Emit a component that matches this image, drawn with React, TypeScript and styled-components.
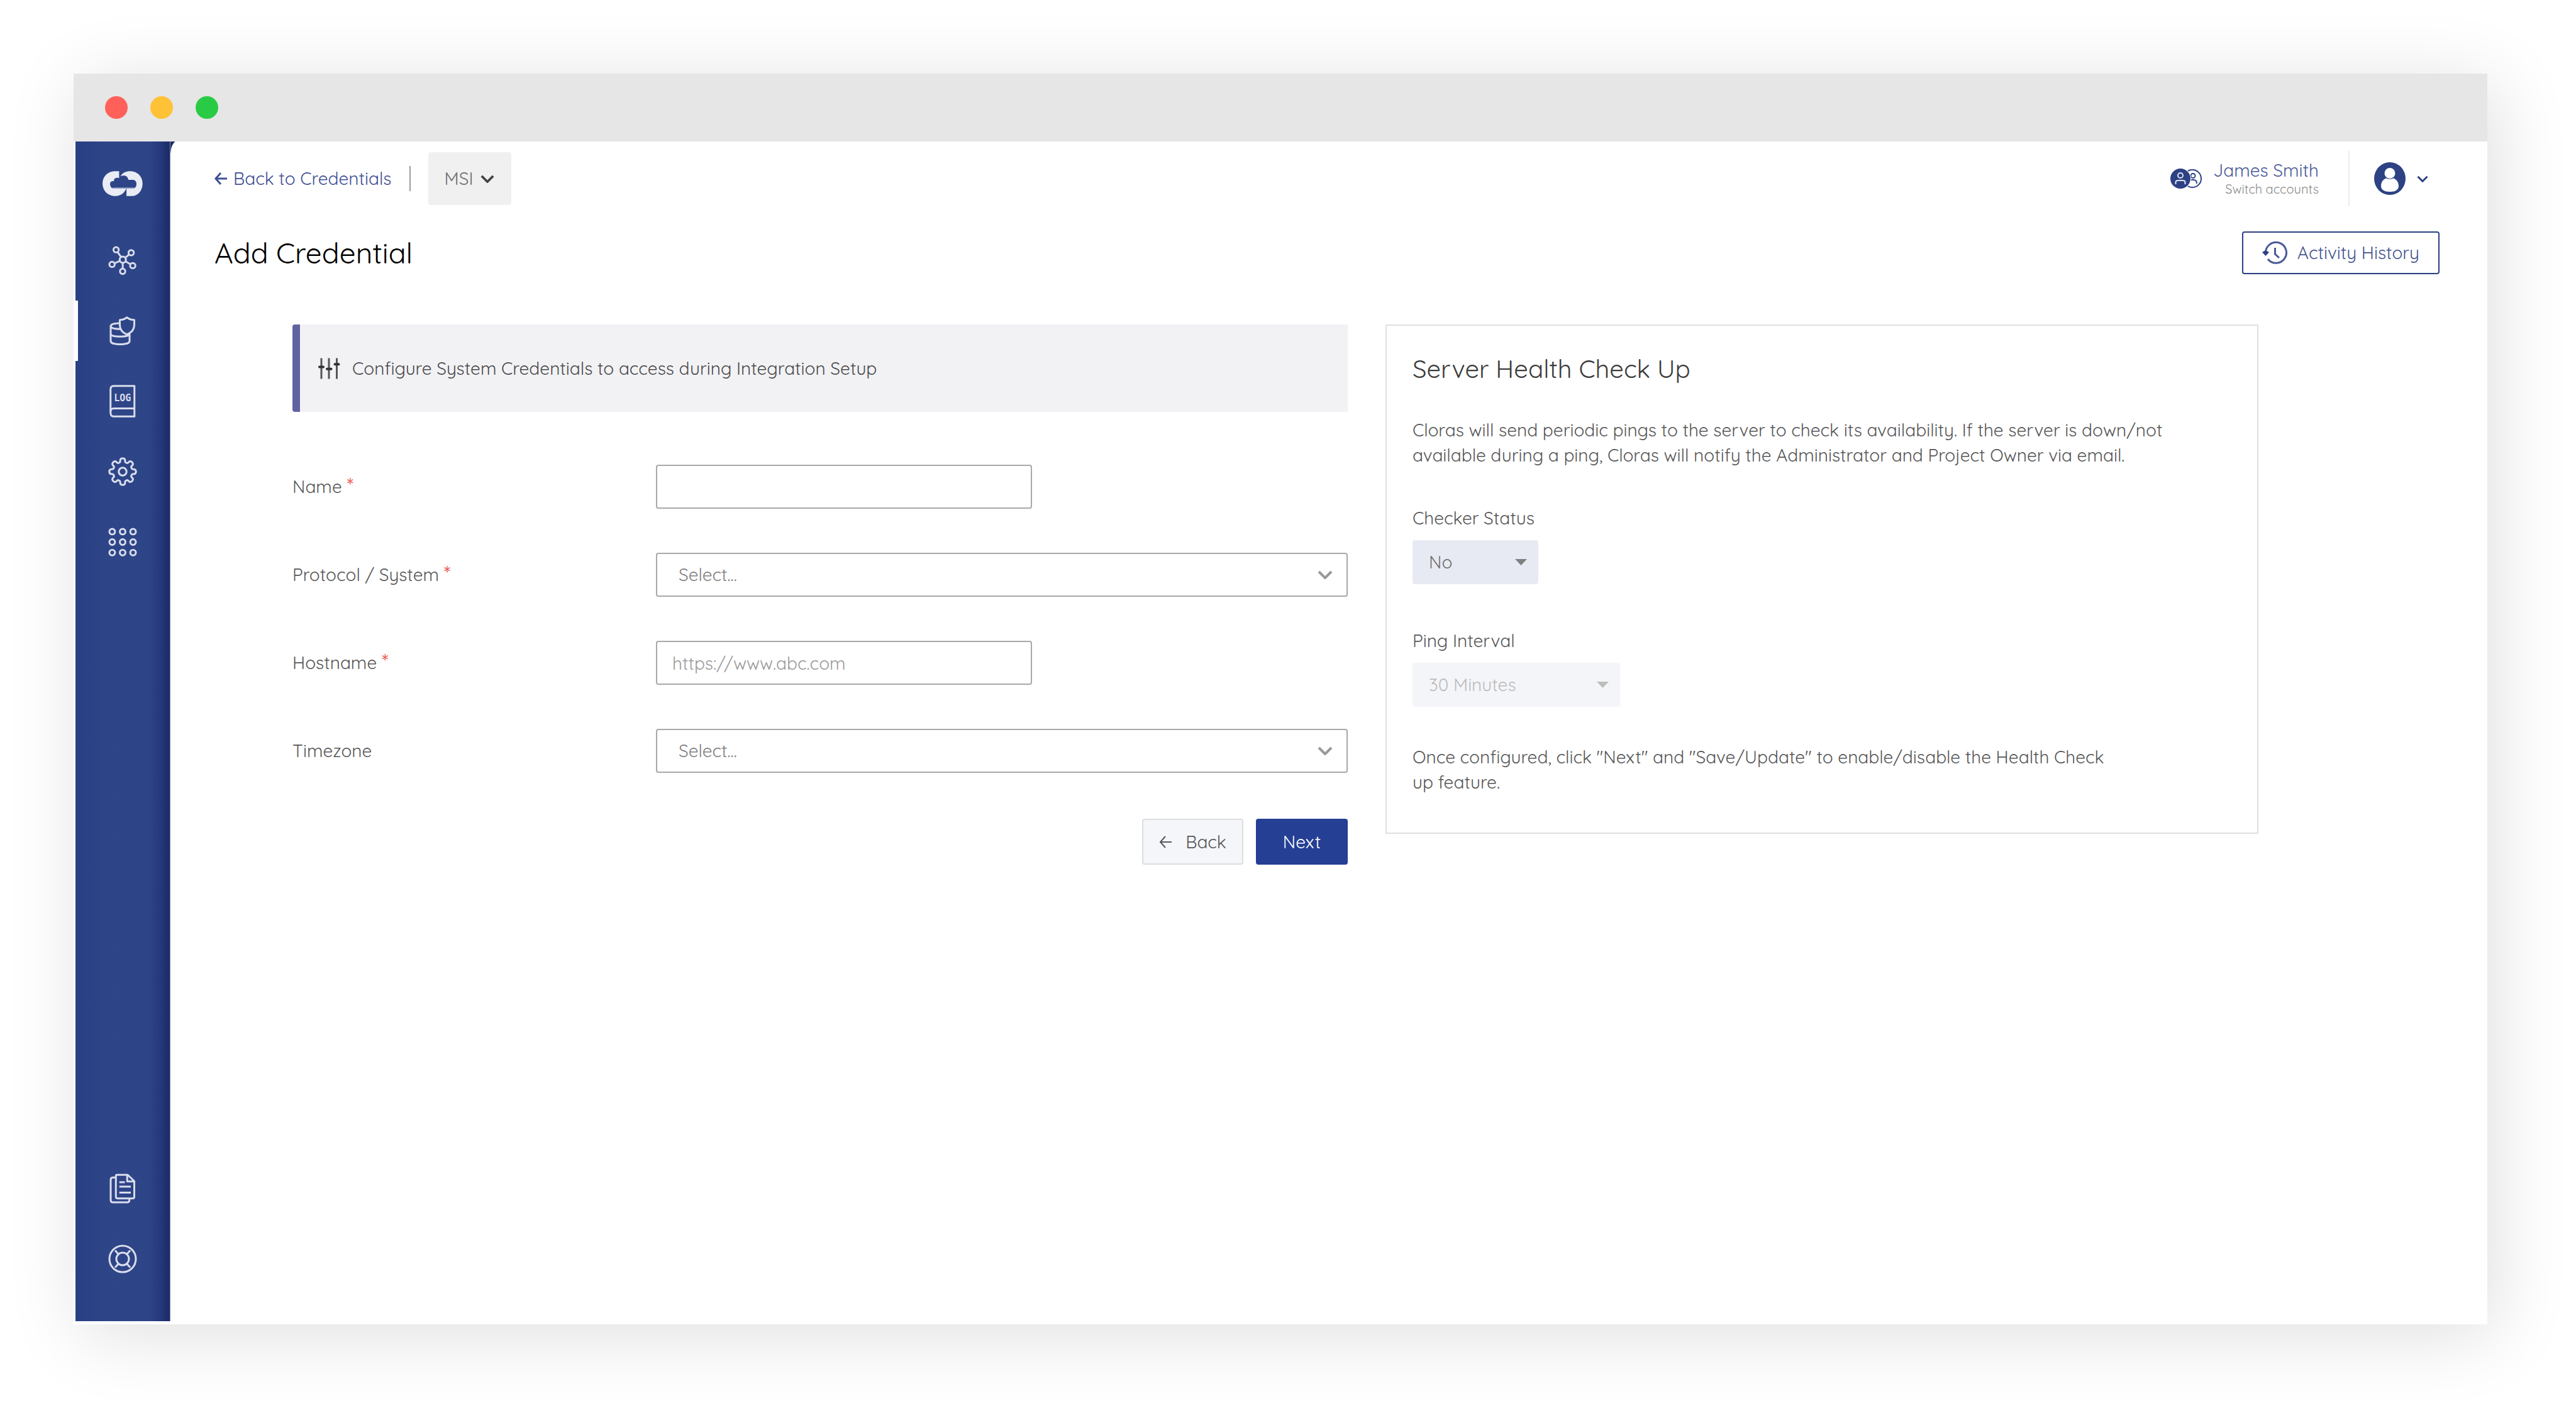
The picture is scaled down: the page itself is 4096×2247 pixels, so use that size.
import React from "react";
import styled, { createGlobalStyle } from "styled-components";

const navy = "#2d4184";
const ink = "#575757";

const GlobalStyle = createGlobalStyle`
  *, *::before, *::after { box-sizing: border-box; }
  body {
    margin: 0;
    background: #fff;
    color: ${ink};
    font-family: Quicksand, Lato, "Open Sans", sans-serif;
    font-size: 28px;
    line-height: 40px;
  }
  button, input, select { font: inherit; color: inherit; margin: 0; }
  h1, h2, p { margin: 0; font-weight: 400; }
  svg { display: block; flex: none; }
`;

/* ---------- window frame ---------- */

const Stage = styled.div`
  display: flex;
  min-height: 100vh;
  padding: 117px 141px 141px 117px;
`;

const Window = styled.div`
  flex: 1;
  display: flex;
  flex-direction: column;
  background: #fff;
  box-shadow: 12px 16px 110px rgba(0, 0, 0, 0.13);
`;

const TitleBar = styled.div`
  display: flex;
  align-items: center;
  gap: 36px;
  height: 108px;
  padding: 0 50px;
  background: #e6e6e6;
`;

const Dot = styled.span<{ $color: string }>`
  width: 36px;
  height: 36px;
  border-radius: 50%;
  background: ${(p) => p.$color};
`;

const Body = styled.div`
  flex: 1;
  display: flex;
`;

/* ---------- sidebar ---------- */

const Sidebar = styled.nav`
  display: flex;
  flex-direction: column;
  width: 151px;
  margin: 0 0 5px 3px;
  padding-bottom: 43px;
  border-right: 1px solid #8089b5;
  background: linear-gradient(
    90deg,
    #293f83 0%,
    #2e4588 35%,
    #2d4487 78%,
    #24377a 91%,
    #1b2a66 100%
  );
`;

const Brand = styled.a`
  display: flex;
  align-items: center;
  justify-content: center;
  height: 133px;
`;

const NavButton = styled.button<{ $active?: boolean }>`
  display: flex;
  align-items: center;
  justify-content: center;
  height: 112px;
  padding: 0;
  border: 0;
  background: ${(p) =>
    p.$active
      ? "linear-gradient(#fff, #fff) 0 center / 4px 96px no-repeat"
      : "none"};
  color: #d8dcec;
`;

const Spacer = styled.div`
  flex: 1;
`;

/* ---------- main area ---------- */

const Main = styled.main`
  flex: 1;
  min-width: 0;
  background:
    radial-gradient(ellipse 16px 22px at 16px 18px, #fff 95%, #1b2a66 100%) 0 0 /
      16px 18px no-repeat,
    #fff;
`;

const Header = styled.header`
  display: flex;
  align-items: center;
  justify-content: space-between;
  height: 88px;
  margin-top: 15px;
  padding: 0 94px 0 70px;
`;

const Cluster = styled.div`
  display: flex;
  align-items: center;
`;

const BackLink = styled.a`
  display: flex;
  align-items: center;
  gap: 10px;
  color: #3f5094;
  text-decoration: none;
`;

const Rule = styled.span<{ $height: number; $color: string; $gap: number }>`
  width: 2px;
  height: ${(p) => p.$height}px;
  margin: 0 ${(p) => p.$gap}px;
  background: ${(p) => p.$color};
`;

const AccountButton = styled.button`
  display: flex;
  align-items: center;
  gap: 18px;
  padding: 0 8px 0 0;
  border: 0;
  background: none;
  text-align: right;
`;

const AccountName = styled.span`
  display: block;
  color: #4a5a98;
  line-height: 34px;
`;

const AccountHint = styled.span`
  display: block;
  color: #8c8c8c;
  font-size: 20px;
  line-height: 26px;
`;

const ProfileButton = styled.button`
  display: flex;
  align-items: center;
  gap: 18px;
  padding: 0;
  border: 0;
  background: none;
  color: ${navy};
`;

const TitleRow = styled.div`
  display: flex;
  align-items: center;
  justify-content: space-between;
  margin-top: 40px;
  padding: 0 76px 0 70px;
`;

const PageTitle = styled.h1`
  color: #000;
  font-size: 46px;
  line-height: 66px;
`;

const HistoryButton = styled.button`
  display: flex;
  align-items: center;
  gap: 16px;
  height: 68px;
  padding: 0 30px;
  border: 2px solid ${navy};
  border-radius: 4px;
  background: #fff;
  box-shadow: 0 2px 4px rgba(0, 0, 0, 0.06);
  color: #43538f;
`;

const Content = styled.div`
  display: grid;
  grid-template-columns: 1678fr 1388fr;
  align-items: start;
  gap: 60px;
  margin-top: 80px;
  padding: 0 364px 0 194px;
`;

/* ---------- form ---------- */

const Form = styled.form`
  display: grid;
  gap: 70px;
`;

const Banner = styled.div`
  display: flex;
  align-items: center;
  gap: 19px;
  height: 139px;
  margin-bottom: 14px;
  padding-left: 29px;
  border-left: 12px solid #6163a1;
  border-radius: 4px 0 0 4px;
  background: #f2f2f5;
  color: #4c4c4c;
`;

const Row = styled.div`
  display: grid;
  grid-template-columns: 578px 1fr;
  align-items: center;
  height: 70px;
`;

const Required = styled.span`
  color: #e8544c;
  font-size: 34px;
  line-height: 28px;
`;

const TextInput = styled.input`
  width: 598px;
  height: 70px;
  padding: 0 24px;
  border: 2px solid #a8a8a8;
  border-radius: 4px;
  background: #fff;
  &::placeholder {
    color: #9b9b9b;
    opacity: 1;
  }
`;

const SelectBox = styled.div<{ $width?: string; $inset: number }>`
  display: grid;
  align-items: center;
  width: ${(p) => p.$width || "100%"};
  > * {
    grid-area: 1 / 1;
  }
  > svg {
    justify-self: end;
    margin-right: ${(p) => p.$inset}px;
    pointer-events: none;
  }
`;

const OutlinedSelect = styled.select`
  appearance: none;
  width: 100%;
  height: 70px;
  padding: 0 34px;
  border: 2px solid #a8a8a8;
  border-radius: 4px;
  background: #fff;
  color: #808080;
`;

const FilledSelect = styled.select<{ $height?: number }>`
  appearance: none;
  width: 100%;
  height: ${(p) => p.$height || 70}px;
  padding: 0 26px;
  border: 0;
  border-radius: 4px;
  background: ${(p) => (p.$height ? "#f0f0f0" : "#e7eaf2")};
  color: #6e6e6e;
  &:disabled {
    background: #f4f5f9;
    color: #bcbcbc;
    opacity: 1;
  }
`;

const Actions = styled.div`
  display: flex;
  justify-content: flex-end;
  gap: 20px;
  margin-top: 3px;
`;

const ActionButton = styled.button<{ $primary?: boolean }>`
  display: flex;
  align-items: center;
  justify-content: center;
  gap: 22px;
  width: ${(p) => (p.$primary ? 146 : 161)}px;
  height: 73px;
  padding: 0;
  border: 2px solid ${(p) => (p.$primary ? "#243f94" : "#dcdddf")};
  border-radius: 4px;
  background: ${(p) => (p.$primary ? "#243f94" : "#f5f6f9")};
  color: ${(p) => (p.$primary ? "#fff" : ink)};
`;

/* ---------- health card ---------- */

const Card = styled.section`
  display: flex;
  flex-direction: column;
  padding: 43px 41px 60px;
  border: 2px solid #e0e0e0;
`;

const CardTitle = styled.h2`
  margin-bottom: 53px;
  color: #3c3c3c;
  font-size: 40px;
  line-height: 50px;
`;

const CardText = styled.p<{ $max: number }>`
  max-width: ${(p) => p.$max}px;
`;

const Field = styled.div<{ $top: number; $bottom: number }>`
  display: grid;
  gap: 15px;
  margin: ${(p) => p.$top}px 0 ${(p) => p.$bottom}px;
`;

/* ---------- icons ---------- */

const Logo = () => (
  <svg width="64" height="40" viewBox="235 251 257 161" aria-hidden="true">
    <path
      fill="#e9ecf4"
      d="M341 252H315C267 252 235 288 235 331C235 376 270 411 318 411C350 411 376 392 387 362H303C291 361 283 350 283 333C283 320 294 314 308 316C306 300 318 290 341 296Z"
    />
    <path
      fill="#e9ecf4"
      d="M349 285C362 262 385 252 412 252C460 252 491 288 491 331C491 376 460 411 423 411H388V362H432C446 361 452 349 452 333C452 317 442 306 425 307H400C398 290 387 280 371 280C361 280 354 282 349 285Z"
    />
    <path stroke="#a3abd0" strokeWidth="5" d="M300 359H438" />
  </svg>
);

const Glyph = ({
  w,
  h,
  box,
  children,
}: {
  w: number;
  h: number;
  box: string;
  children: React.ReactNode;
}) => (
  <svg
    width={w}
    height={h}
    viewBox={box}
    fill="none"
    stroke="currentColor"
    strokeWidth="12"
    strokeLinejoin="round"
    aria-hidden="true"
  >
    {children}
  </svg>
);

const nodes = [
  [321, 751],
  [418, 770],
  [295, 845],
  [428, 853],
  [363, 890],
];

const NetworkIcon = () => (
  <Glyph w={46} h={48} box="270 722 186 194">
    <circle cx="364" cy="815" r="20" />
    {nodes.map(([x, y]) => {
      const d = Math.hypot(x - 364, y - 815);
      const ux = (x - 364) / d;
      const uy = (y - 815) / d;
      return (
        <g key={x}>
          <circle cx={x} cy={y} r="17" />
          <path
            d={`M${364 + ux * 20} ${815 + uy * 20}L${x - ux * 17} ${y - uy * 17}`}
          />
        </g>
      );
    })}
  </Glyph>
);

const VaultIcon = () => (
  <Glyph w={42} h={46} box="280 1177 168 184">
    <path d="M391 1184C378 1195 362 1200 346 1200V1232C346 1262 365 1282 391 1293C417 1282 438 1262 438 1232V1200C420 1200 404 1195 391 1184Z" />
    <path d="M345 1221C310 1221 288 1228 288 1241V1335C288 1348 315 1355 348 1355C382 1355 408 1348 408 1335V1288" />
    <path d="M288 1241C292 1253 315 1258 352 1258M288 1292C294 1303 320 1306 348 1306C376 1306 402 1303 408 1292" />
  </Glyph>
);

const LogIcon = () => (
  <Glyph w={42} h={52} box="281 233 168 208">
    <path d="M440 240H308Q288 240 288 262V408Q288 434 308 434H440Z" />
    <path d="M288 402Q290 383 308 383H440" />
    <text
      x="364"
      y="336"
      fill="currentColor"
      stroke="none"
      fontFamily="'DejaVu Sans Mono', monospace"
      fontWeight="700"
      fontSize="60"
      textAnchor="middle"
    >
      LOG
    </text>
  </Glyph>
);

const gearPath = (() => {
  const at = (deg: number, r: number) => {
    const a = (deg * Math.PI) / 180;
    return `${(100 + r * Math.sin(a)).toFixed(1)} ${(100 - r * Math.cos(a)).toFixed(1)}`;
  };
  let d = `M${at(-12, 74)}`;
  for (let i = 0; i < 8; i++) {
    const t = i * 45;
    d += `Q${at(t - 10, 85)} ${at(t, 85)}Q${at(t + 10, 85)} ${at(t + 12, 74)}`;
    d += `Q${at(t + 14, 58)} ${at(t + 22.5, 62)}Q${at(t + 31, 58)} ${at(t + 33, 74)}`;
  }
  return d + "Z";
})();

const GearIcon = () => (
  <Glyph w={46} h={46} box="8 8 184 184">
    <path d={gearPath} />
    <circle cx="100" cy="100" r="25" />
  </Glyph>
);

const AppsIcon = () => (
  <Glyph w={46} h={46} box="271 1138 186 186">
    {[1164, 1231, 1299].map((y) =>
      [297, 364, 431].map((x) => (
        <circle key={`${x}-${y}`} cx={x} cy={y} r="18" />
      ))
    )}
  </Glyph>
);

const DocsIcon = () => (
  <Glyph w={42} h={48} box="280 166 168 192">
    <path d="M328 175H396L438 215V315Q438 325 428 325H333Q321 325 321 313V182Q321 175 328 175Z" />
    <path d="M393 177V217H438M343 222H378M343 250H416M343 288H416" />
    <path d="M321 192H303Q288 192 288 207V335Q288 350 303 350H392Q407 350 407 335V325" />
  </Glyph>
);

const HelpIcon = () => (
  <Glyph w={46} h={46} box="272 616 184 184">
    <circle cx="364" cy="708" r="84" />
    <circle cx="364" cy="708" r="40" />
    <path d="M316 654L338 678M412 654L390 678M316 762L338 738M412 762L390 738" />
  </Glyph>
);

const ArrowLeft = ({ weight }: { weight: number }) => (
  <svg
    width="20"
    height="20"
    viewBox="0 0 20 20"
    fill="none"
    stroke="currentColor"
    strokeWidth={weight}
    aria-hidden="true"
  >
    <path d="M20 10H2M10 1L2 10L10 19" />
  </svg>
);

const Chevron = ({ w, color }: { w: number; color: string }) => (
  <svg
    width={w}
    height={w / 2 + 2}
    viewBox="0 0 24 14"
    fill="none"
    stroke={color}
    strokeWidth="4"
    aria-hidden="true"
  >
    <path d="M2 2L12 12L22 2" />
  </svg>
);

const Caret = ({ color }: { color: string }) => (
  <svg width="19" height="10" viewBox="0 0 19 10" aria-hidden="true">
    <path fill={color} d="M0 0H19L9.5 10Z" />
  </svg>
);

const SlidersIcon = () => (
  <svg width="35" height="34" viewBox="200 236 140 136" aria-hidden="true">
    <path
      stroke="#555"
      strokeWidth="12"
      d="M220 238V370M268 238V370M318 238V370"
    />
    <path
      stroke="#333"
      strokeWidth="16"
      strokeLinecap="round"
      d="M208 294H232M256 307H282M306 277H330"
    />
  </svg>
);

const SwitchIcon = () => (
  <svg
    width="50"
    height="34"
    viewBox="0 0 50 34"
    fill="none"
    strokeWidth="2"
    aria-hidden="true"
  >
    <circle cx="35" cy="17" r="14" stroke={navy} />
    <circle cx="36" cy="12.5" r="3.5" stroke={navy} />
    <path stroke={navy} d="M33 19H37Q42 19 42 25" />
    <circle cx="16" cy="17" r="17" fill="#fff" />
    <circle cx="16" cy="17" r="16" fill={navy} />
    <circle cx="16" cy="12" r="4" stroke="#dfe3f0" />
    <path stroke="#dfe3f0" d="M8.500 26V23Q8.500 20 12 20H20Q23.500 20 23.500 23V26" />
  </svg>
);

const AvatarIcon = () => (
  <svg width="50" height="52" viewBox="0 0 50 52" aria-hidden="true">
    <ellipse cx="25" cy="26" rx="25" ry="26" fill={navy} />
    <circle cx="25" cy="17.500" r="8.500" fill="#fff" />
    <path
      fill="#fff"
      d="M19 25.500Q25 28 31 25.500C37 28 39 33 39 38C39 44 33 47 25 47C17 47 11 44 11 38C11 33 13 28 19 25.500Z"
    />
  </svg>
);

const HistoryIcon = () => (
  <svg
    width="40"
    height="38"
    viewBox="0 0 40 38"
    fill="none"
    stroke="#4a5a98"
    strokeWidth="3"
    aria-hidden="true"
  >
    <path d="M5.500 19A16.500 16.500 0 1 1 9 29" />
    <path d="M20.500 11V21L27 27" />
    <path fill={navy} stroke="none" d="M0 18L5.500 15L11 18L5.500 24Z" />
  </svg>
);

/* ---------- page ---------- */

const mainNav = [
  { label: "Integrations", icon: <NetworkIcon /> },
  { label: "Credentials", icon: <VaultIcon />, active: true },
  { label: "Logs", icon: <LogIcon /> },
  { label: "Settings", icon: <GearIcon /> },
  { label: "Apps", icon: <AppsIcon /> },
];

const footNav = [
  { label: "Documents", icon: <DocsIcon /> },
  { label: "Help", icon: <HelpIcon /> },
];

const fields = [
  { id: "name", label: "Name", required: true, kind: "text" },
  { id: "protocol", label: "Protocol / System", required: true, kind: "select" },
  {
    id: "hostname",
    label: "Hostname",
    required: true,
    kind: "text",
    placeholder: "https://www.abc.com",
  },
  { id: "timezone", label: "Timezone", required: false, kind: "select" },
];

export default function App() {
  return (
    <>
      <GlobalStyle />
      <Stage>
        <Window>
          <TitleBar>
            <Dot $color="#ff615a" />
            <Dot $color="#ffc136" />
            <Dot $color="#2acb44" />
          </TitleBar>
          <Body>
            <Sidebar aria-label="Main">
              <Brand href="#" aria-label="Cloras">
                <Logo />
              </Brand>
              {mainNav.map((n) => (
                <NavButton key={n.label} aria-label={n.label} $active={n.active}>
                  {n.icon}
                </NavButton>
              ))}
              <Spacer />
              {footNav.map((n) => (
                <NavButton key={n.label} aria-label={n.label}>
                  {n.icon}
                </NavButton>
              ))}
            </Sidebar>
            <Main>
              <Header>
                <Cluster>
                  <BackLink href="#">
                    <ArrowLeft weight={3} />
                    Back to Credentials
                  </BackLink>
                  <Rule $height={40} $color="#9a9a9a" $gap={28} />
                  <SelectBox $width="132px" $inset={27}>
                    <FilledSelect $height={84} aria-label="Workspace">
                      <option>MSI</option>
                    </FilledSelect>
                    <Chevron w={22} color="#444" />
                  </SelectBox>
                </Cluster>
                <Cluster>
                  <AccountButton>
                    <SwitchIcon />
                    <span>
                      <AccountName>James Smith</AccountName>
                      <AccountHint>Switch accounts</AccountHint>
                    </span>
                  </AccountButton>
                  <Rule $height={88} $color="#ececf3" $gap={39} />
                  <ProfileButton aria-label="Profile">
                    <AvatarIcon />
                    <Chevron w={18} color={navy} />
                  </ProfileButton>
                </Cluster>
              </Header>
              <TitleRow>
                <PageTitle>Add Credential</PageTitle>
                <HistoryButton>
                  <HistoryIcon />
                  Activity History
                </HistoryButton>
              </TitleRow>
              <Content>
                <Form onSubmit={(e) => e.preventDefault()}>
                  <Banner>
                    <SlidersIcon />
                    Configure System Credentials to access during Integration Setup
                  </Banner>
                  {fields.map((f) => (
                    <Row key={f.id}>
                      <label htmlFor={f.id}>
                        {f.label} {f.required && <Required>*</Required>}
                      </label>
                      {f.kind === "text" ? (
                        <TextInput id={f.id} placeholder={f.placeholder} />
                      ) : (
                        <SelectBox $inset={24}>
                          <OutlinedSelect id={f.id}>
                            <option>Select...</option>
                          </OutlinedSelect>
                          <Chevron w={24} color="#999" />
                        </SelectBox>
                      )}
                    </Row>
                  ))}
                  <Actions>
                    <ActionButton type="button">
                      <ArrowLeft weight={2} />
                      Back
                    </ActionButton>
                    <ActionButton type="submit" $primary>
                      Next
                    </ActionButton>
                  </Actions>
                </Form>
                <Card>
                  <CardTitle>Server Health Check Up</CardTitle>
                  <CardText $max={1220}>
                    Cloras will send periodic pings to the server to check its
                    availability. If the server is down/not available during a
                    ping, Cloras will notify the Administrator and Project Owner
                    via email.
                  </CardText>
                  <Field $top={60} $bottom={70}>
                    <label htmlFor="status">Checker Status</label>
                    <SelectBox $width="200px" $inset={18}>
                      <FilledSelect id="status">
                        <option>No</option>
                      </FilledSelect>
                      <Caret color="#808080" />
                    </SelectBox>
                  </Field>
                  <Field $top={0} $bottom={60}>
                    <label htmlFor="interval">Ping Interval</label>
                    <SelectBox $width="330px" $inset={18}>
                      <FilledSelect id="interval" disabled>
                        <option>30 Minutes</option>
                      </FilledSelect>
                      <Caret color="#bdbdbd" />
                    </SelectBox>
                  </Field>
                  <CardText $max={1130}>
                    Once configured, click "Next" and "Save/Update" to
                    enable/disable the Health Check up feature.
                  </CardText>
                </Card>
              </Content>
            </Main>
          </Body>
        </Window>
      </Stage>
    </>
  );
}
